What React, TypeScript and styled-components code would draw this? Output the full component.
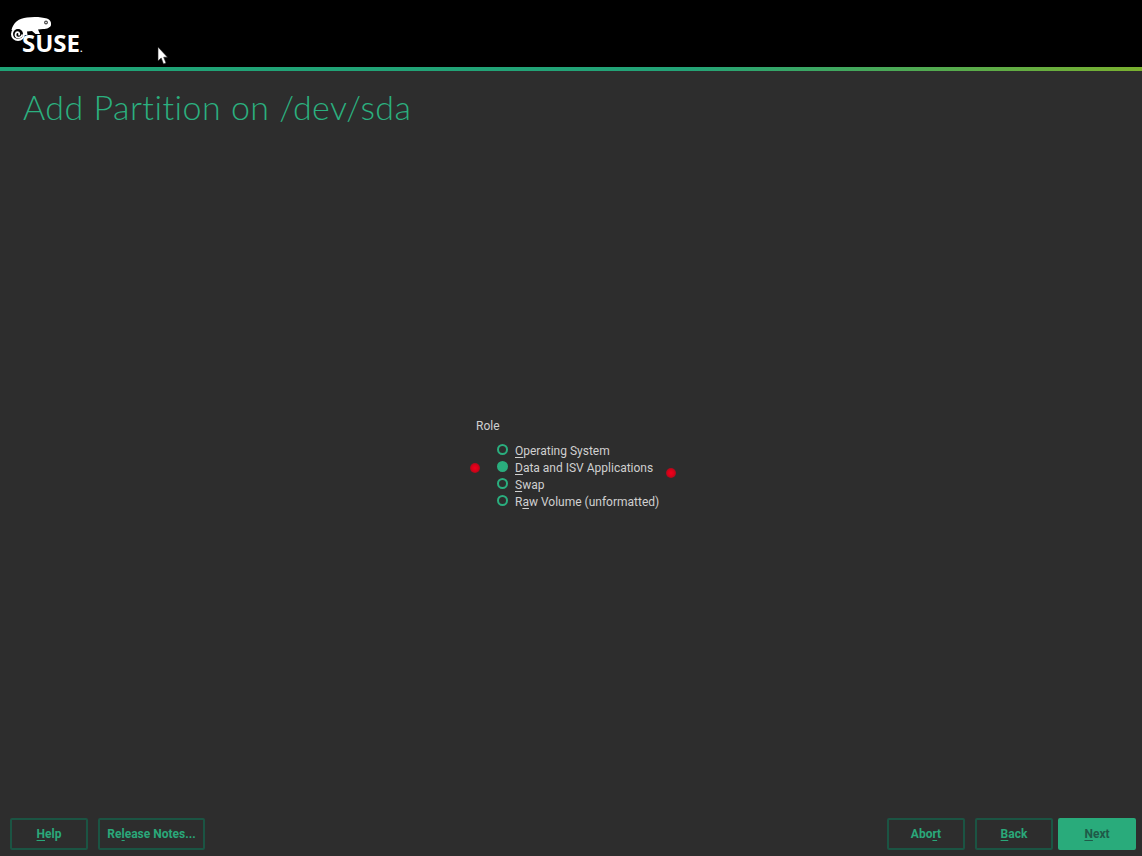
import React from "react";
import styled, { createGlobalStyle } from "styled-components";

const Global = createGlobalStyle`
  html, body { margin: 0; padding: 0; height: 100%; background: #2d2d2d; }
  #root { height: 100%; }
`;

const Page = styled.div`
  width: 1142px;
  height: 856px;
  display: flex;
  flex-direction: column;
  background: #2d2d2d;
  overflow: hidden;
  position: relative;
  font-family: "Open Sans", "Liberation Sans", sans-serif;
`;

const Header = styled.header`
  height: 67px;
  flex: none;
  background: #000;
  position: relative;
  padding: 16px 0 0 10px;
  box-sizing: border-box;
`;

const Rule = styled.div`
  height: 4px;
  flex: none;
  background: linear-gradient(90deg, #1fa376 0%, #23a377 60%, #7ab02f 100%);
`;

const Logo = styled.div`
  position: relative;
  width: 74px;
  height: 38px;
`;

const LogoMark = styled.svg`
  display: block;
  width: 44px;
  height: 27px;
`;

const LogoWord = styled.span`
  position: absolute;
  left: 12px;
  top: 15px;
  font-family: "Open Sans", sans-serif;
  font-weight: 700;
  font-size: 24px;
  line-height: 24px;
  letter-spacing: 0;
  color: #fff;
  white-space: nowrap;
`;

const LogoDot = styled.span`
  font-size: 9px;
`;

const Cursor = styled.svg`
  position: absolute;
  left: 157px;
  top: 46px;
  width: 11px;
  height: 19px;
`;

const Title = styled.h1`
  margin: 0;
  padding: 16px 0 0 23px;
  height: 63px;
  flex: none;
  box-sizing: border-box;
  font-family: Lato, "Open Sans", sans-serif;
  font-weight: 300;
  font-size: 34px;
  letter-spacing: 0.46px;
  line-height: 40px;
  color: #2bb07f;
`;

const Content = styled.main`
  flex: 1;
  min-height: 0;
  display: flex;
  justify-content: center;
  align-items: flex-start;
  padding: 283px 0 0 0;
  box-sizing: border-box;
`;

const RoleBox = styled.section`
  width: 190px;
  position: relative;
  font-family: Roboto, "Liberation Sans", sans-serif;
  font-size: 12px;
  color: #d0d0d0;
`;

const RoleLabel = styled.div`
  height: 17px;
  line-height: 18px;
  margin-bottom: 8px;
`;

const Options = styled.div`
  display: flex;
  flex-direction: column;
  padding-left: 21px;
`;

const Option = styled.label`
  height: 17px;
  display: flex;
  align-items: center;
  gap: 7px;
  line-height: 18px;
  white-space: nowrap;
`;

const Radio = styled.span<{ $on?: boolean }>`
  width: 11px;
  height: 11px;
  flex: none;
  position: relative;
  top: -1px;
  border-radius: 50%;
  box-sizing: border-box;
  border: 2px solid #2aae7e;
  background: ${(p) => (p.$on ? "#2aae7e" : "transparent")};
`;

const Key = styled.span`
  text-decoration: underline;
  text-underline-offset: 2px;
`;

const Dot = styled.span<{ $left: number; $top: number }>`
  position: absolute;
  left: ${(p) => p.$left}px;
  top: ${(p) => p.$top}px;
  width: 10px;
  height: 10px;
  border-radius: 50%;
  background: radial-gradient(circle, #f0001c 0%, #d80018 45%, #6a1a20 100%);
`;

const Footer = styled.footer`
  height: 42px;
  flex: none;
  display: flex;
  justify-content: space-between;
  align-items: flex-end;
  padding: 0 6px 6px 10px;
  box-sizing: border-box;
`;

const Group = styled.div`
  display: flex;
  gap: 10px;
`;

const Button = styled.button<{ $primary?: boolean; $w: number }>`
  width: ${(p) => p.$w}px;
  height: 32px;
  padding: 0;
  border-radius: 2px;
  box-sizing: border-box;
  border: 2px solid ${(p) => (p.$primary ? "#29ab7b" : "#1b5443")};
  background: ${(p) => (p.$primary ? "#29ab7b" : "transparent")};
  color: ${(p) => (p.$primary ? "#1f5a48" : "#2aa87a")};
  font-family: Roboto, "Liberation Sans", sans-serif;
  font-weight: 700;
  font-size: 12px;
  margin-left: ${(p) => (p.$primary ? -5 : 0)}px;
`;

const options: [string, string, boolean?][] = [
  ["O", "perating System"],
  ["D", "ata and ISV Applications", true],
  ["S", "wap"],
];

export default function App() {
  return (
    <Page>
      <Global />
      <Header>
        <Logo>
          <LogoMark viewBox="0 0 44 27">
            <path
              fill="#fff"
              d="M1.5 14C3 7 9 2 17 1.5C24 0.5 32 1 37 2.5C40 3.5 41.5 6 41 9C40.5 11.5 37 13 33 13L28 13.5L30 18L25.5 18L22 15L17 15.5L17.5 19L13 19L9 14Z"
            />
            <circle cx="8" cy="18" r="7" fill="#fff" />
            <circle cx="8" cy="18" r="5" fill="#000" />
            <path
              fill="none"
              stroke="#fff"
              strokeWidth="1.8"
              d="M8.5 19.2C9.8 18.6 9.5 16.2 7.5 16.2C5.5 16.2 5 19 6 20.5C7.5 22.5 11 22 12.5 18.5"
            />
            <circle cx="36" cy="6.5" r="1.9" fill="#444" />
            <circle cx="36" cy="6.5" r="0.8" fill="#fff" />
          </LogoMark>
          <LogoWord>
            SUSE<LogoDot>.</LogoDot>
          </LogoWord>
        </Logo>
        <Cursor viewBox="0 0 11 19">
          <path
            fill="#fff"
            stroke="#222"
            strokeWidth="0.6"
            d="M1 1V15L4.2 12L6.5 18L9 17L6.7 11.2H10.5Z"
          />
        </Cursor>
      </Header>
      <Rule />
      <Title>Add Partition on /dev/sda</Title>
      <Content>
        <RoleBox>
          <RoleLabel>Role</RoleLabel>
          <Options>
            {options.map(([k, rest, on]) => (
              <Option key={k}>
                <Radio $on={on} />
                <span>
                  <Key>{k}</Key>
                  {rest}
                </span>
              </Option>
            ))}
            <Option>
              <Radio />
              <span>
                R<Key>a</Key>w Volume (unformatted)
              </span>
            </Option>
          </Options>
          <Dot $left={-6} $top={46} />
          <Dot $left={190} $top={51} />
        </RoleBox>
      </Content>
      <Footer>
        <Group>
          <Button $w={78}>
            <Key>H</Key>elp
          </Button>
          <Button $w={107}>
            Re<Key>l</Key>ease Notes...
          </Button>
        </Group>
        <Group>
          <Button $w={78}>
            Abo<Key>r</Key>t
          </Button>
          <Button $w={78}>
            <Key>B</Key>ack
          </Button>
          <Button $w={78} $primary>
            <Key>N</Key>ext
          </Button>
        </Group>
      </Footer>
    </Page>
  );
}
